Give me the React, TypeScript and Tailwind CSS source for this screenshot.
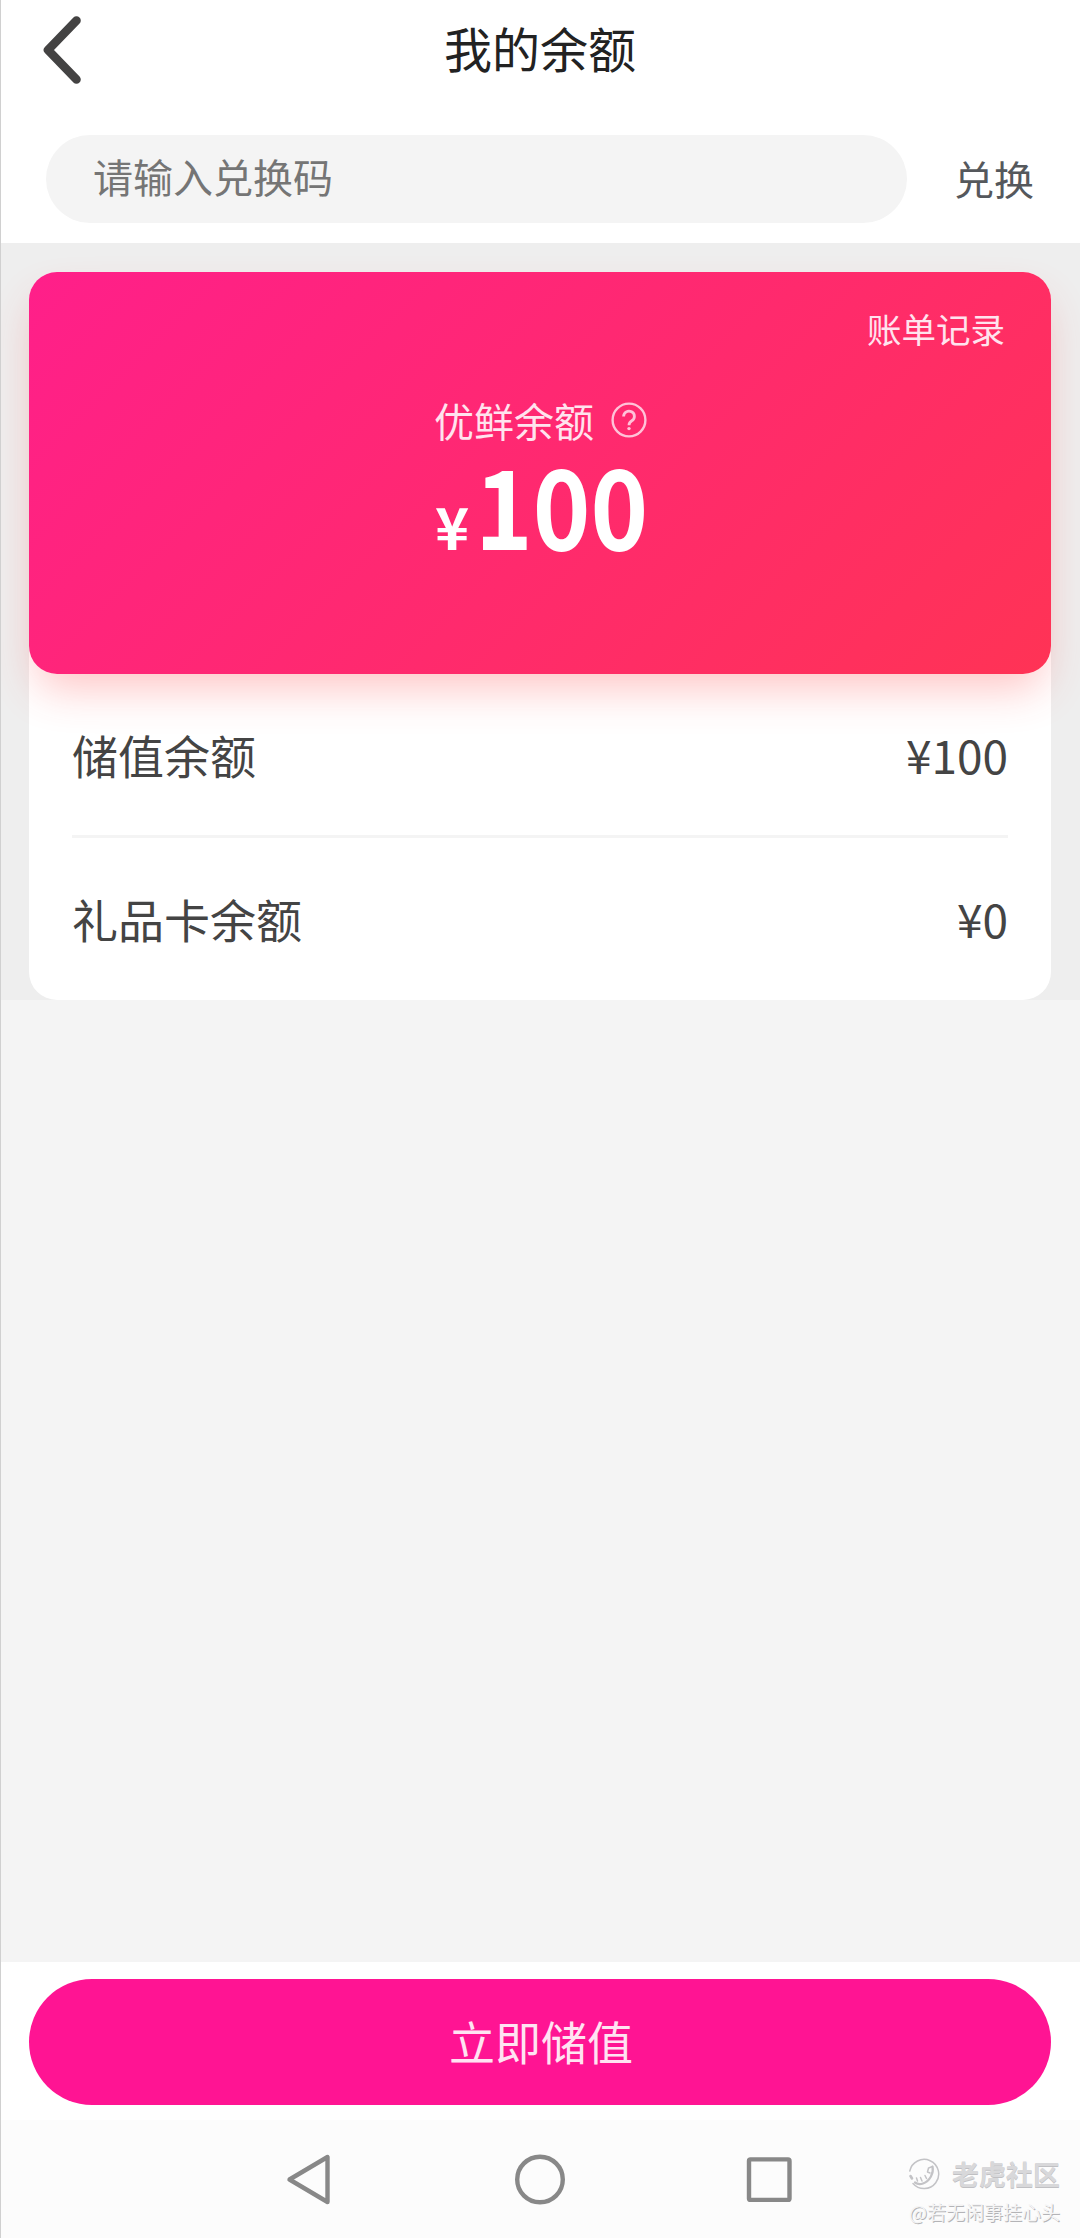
import { useState } from "react";

const balances = [
  { id: "stored", label: "储值余额", amount: 100 },
  { id: "gift", label: "礼品卡余额", amount: 0 },
];

function Header() {
  return (
    <div className="grid grid-cols-3 items-center h-[94px] pl-[40px] pr-10">
      <button type="button" aria-label="返回" className="w-[44px] pt-1.5">
        <svg width="44" height="72" viewBox="0 0 44 72" fill="none">
          <path
            d="M36.5 6.5 L8 36 L36.5 65.5"
            stroke="#444343"
            strokeWidth="8.6"
            strokeLinecap="round"
            strokeLinejoin="round"
          />
        </svg>
      </button>
      <h1 className="text-center text-[48px] leading-[94px] text-[#222]">
        我的余额
      </h1>
    </div>
  );
}

function RedeemBar() {
  const [code, setCode] = useState("");

  return (
    <div className="flex items-center mt-[41px] mx-[46px]">
      <input
        value={code}
        onChange={(e) => setCode(e.target.value)}
        placeholder="请输入兑换码"
        className="w-[861px] h-[88px] pl-[47px] pb-1.5 rounded-full bg-[#f4f4f4] text-[40px] text-[#444] placeholder:text-[#757575] outline-none"
      />
      <button type="button" className="ml-auto pb-0.5 text-[40px] text-[#55585c]">
        兑换
      </button>
    </div>
  );
}

function BalanceCard() {
  return (
    <div className="relative h-[402px] rounded-[28px] bg-linear-[135deg,#ff1f8a,#ff3355] shadow-[0_22px_44px_-8px_rgba(255,60,60,0.3)] text-white">
      <div className="flex justify-end pt-[33px] pr-[46px] text-[34.5px] leading-[46px] text-[#ffe3ee]">
        账单记录
      </div>
      <div className="flex flex-col w-[214px] mx-auto pl-px">
        <div className="flex items-center justify-between mt-[40px] text-[40px] leading-[58px] text-[#ffe3ee]">
          优鲜余额
          <svg
            width="36"
            height="36"
            viewBox="0 0 36 36"
            fill="none"
            stroke="#ffc2d8"
            strokeWidth="2.4"
            className="-mt-px"
          >
            <circle cx="18" cy="18" r="16.4" />
            <path
              d="M12.6 14.4a5.4 5.2 0 1 1 8.2 4.4c-1.9 1.2-2.8 2-2.8 4.4"
              strokeWidth="2.8"
            />
            <circle cx="18" cy="26.6" r="1.7" fill="#ffc2d8" stroke="none" />
          </svg>
        </div>
        <div className="flex items-baseline mt-[3px] ml-px font-bold whitespace-nowrap">
          <span className="text-[58px] leading-[100px]">¥</span>
          <span className="ml-1.5 text-[110px] leading-[100px] origin-left scale-x-[0.89]">
            100
          </span>
        </div>
      </div>
    </div>
  );
}

function BalanceList() {
  return (
    <div className="px-[43px]">
      {balances.map((item) => (
        <div
          key={item.id}
          className="flex items-center justify-between h-[164px] pb-[3px] text-[46px] text-[#444] first:pb-0 first:border-b-[3px] first:border-[#f4f4f4]"
        >
          <span>{item.label}</span>
          <span>¥{item.amount}</span>
        </div>
      ))}
    </div>
  );
}

function SystemNav() {
  return (
    <div className="relative h-[118px] bg-[#fcfcfc]">
      <svg
        width="1080"
        height="118"
        viewBox="0 0 1080 118"
        fill="none"
        stroke="#888"
        strokeWidth="4.4"
        strokeLinejoin="round"
      >
        <path d="M327.5 37 V82 L289.5 59.5 Z" />
        <circle cx="540" cy="59.5" r="22.8" />
        <rect x="749" y="39.4" width="40.5" height="40.5" rx="1.5" />
      </svg>
      <div className="absolute right-[20px] top-[36px] flex flex-col items-end">
        <div className="flex items-center gap-3 text-[27px] leading-[36px] font-bold text-[#d8d8da] [text-shadow:0_1px_0_#c0c0c3]">
          <svg
            width="32"
            height="32"
            viewBox="0 0 32 32"
            fill="none"
            stroke="#c3c3c6"
            strokeWidth="1.5"
            strokeLinecap="round"
          >
            <path d="M1.8 13 A14.6 14.6 0 1 1 5 25.5" />
            <path
              d="M24.5 8.5 C26 15 22 23 15 25.5 C12 26.5 9 26 7 24.5"
              strokeWidth="2.2"
            />
            <path d="M24.5 8.5 L20.5 10 L19.5 14 M19.5 14 L22 15 M17 17.5 L18.5 20.5 M12.5 19.5 L14 23 M8.5 20 L9.5 23" />
            <path d="M2.5 18 L4 20.5" strokeWidth="2.6" />
          </svg>
          老虎社区
        </div>
        <div className="mt-1.5 text-[19px] leading-[28px] text-[#f4f4f5] [text-shadow:1px_1px_0_#b4b4b7]">
          @若无闲事挂心头
        </div>
      </div>
    </div>
  );
}

function App() {
  return (
    <div className="relative flex flex-col w-[1080px] h-[2238px] bg-[#f4f4f4] font-['Noto_Sans_CJK_SC',sans-serif]">
      <div className="h-[243px] bg-white">
        <Header />
        <RedeemBar />
      </div>
      <div className="h-[757px] px-[29px] pt-[29px] bg-[#eee] overflow-hidden">
        <div className="h-[728px] rounded-[28px] bg-white">
          <BalanceCard />
          <BalanceList />
        </div>
      </div>
      <div className="grow" />
      <div className="h-[158px] px-[29px] pt-[17px] bg-white">
        <button
          type="button"
          className="w-full h-[126px] pb-1 pl-0.5 rounded-full bg-[#ff1493] text-[46px] text-[#ffe3f2]"
        >
          立即储值
        </button>
      </div>
      <SystemNav />
      {/* hairline along the left edge of the screen */}
      <div className="absolute inset-y-0 left-0 w-px bg-[#d0d0d0]" />
    </div>
  );
}

export default App;
